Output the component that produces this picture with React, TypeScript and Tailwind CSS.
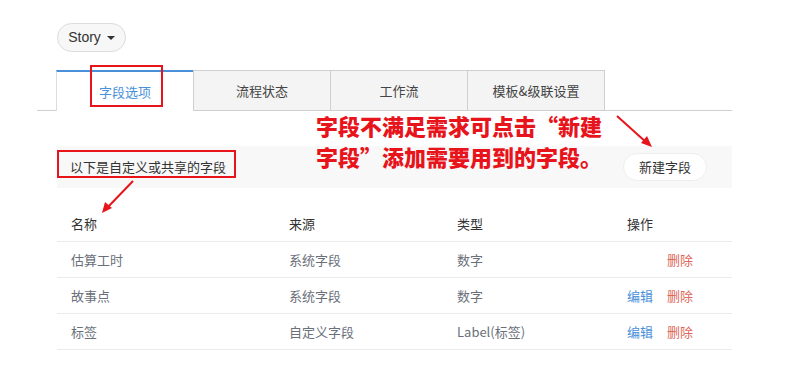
import React from "react";

const rows = [
  { name: "估算工时", src: "系统字段", type: "数字", edit: false },
  { name: "故事点", src: "系统字段", type: "数字", edit: true },
  { name: "标签", src: "自定义字段", type: "Label(标签)", edit: true },
];

export default function App() {
  return (
    <div
      className="relative w-[805px] h-[390px] bg-white overflow-hidden"
      style={{ fontFamily: '"Microsoft YaHei", "Noto Sans CJK SC", "Liberation Sans", sans-serif' }}
    >
      <div className="pt-[23px] pl-[57px]">
        <button className="h-[29px] w-[69px] rounded-full border border-[#dcdcdc] bg-[#f7f7f7] flex items-center justify-center gap-[6px] text-[14px] text-[#333]">
          <span style={{ fontFamily: '"Liberation Sans", Arial, sans-serif' }}>Story</span>
          <span className="w-0 h-0 border-l-[4px] border-r-[4px] border-t-[4px] border-l-transparent border-r-transparent border-t-[#333]" />
        </button>
      </div>

      <div className="mt-[18px] ml-[37px] w-[695px] border-b border-[#cfcfcf] pl-[19px] flex items-end h-[41px]">
        <div className="relative w-[137px] h-[41px] -mb-px bg-white border-t-2 border-t-[#4a90d9] border-l border-l-[#dcdcdc] flex items-center justify-center text-[13px] text-[#4a90d9]">
          字段选项
          <div className="absolute left-[33px] top-[-7px] w-[73px] h-[42px] border-2 border-[#e8141c]" />
        </div>
        <div className="w-[137px] h-[40px] bg-[#f4f4f4] border-t border-l border-[#cfcfcf] flex items-center justify-center text-[13px] text-[#444]">
          流程状态
        </div>
        <div className="w-[137px] h-[40px] bg-[#f4f4f4] border-t border-l border-[#cfcfcf] flex items-center justify-center text-[13px] text-[#444]">
          工作流
        </div>
        <div className="w-[138px] h-[40px] bg-[#f4f4f4] border-t border-l border-r border-[#cfcfcf] flex items-center justify-center text-[13px] text-[#444]">
          模板&amp;级联设置
        </div>
      </div>

      <div className="ml-[57px] w-[675px] mt-[35px] h-[42px] bg-[#f8f8f8] flex items-center justify-between pl-[13px] pr-[25px]">
        <div className="relative text-[13px] text-[#333]">
          以下是自定义或共享的字段
          <div className="absolute left-[-13px] top-[-7px] w-[179px] h-[28px] border-2 border-[#e8141c]" />
        </div>
        <button className="h-[28px] w-[84px] rounded-full bg-white border border-[#eeeeee] text-[13px] text-[#333] flex items-center justify-center">
          新建字段
        </button>
      </div>

      <div className="ml-[57px] w-[675px] mt-[18px] text-[13px]">
        <div className="grid grid-cols-[218px_168px_170px_119px] h-[36px] items-center border-b border-[#ebebeb] text-[#333]">
          <div className="pl-[14px]">名称</div>
          <div className="pl-[14px]">来源</div>
          <div className="pl-[14px]">类型</div>
          <div className="pl-[14px]">操作</div>
        </div>
        {rows.map((r) => (
          <div
            key={r.name}
            className="grid grid-cols-[218px_168px_170px_119px] h-[36px] items-center border-b border-[#ebebeb] text-[#6a707a]"
          >
            <div className="pl-[14px]">{r.name}</div>
            <div className="pl-[14px]">{r.src}</div>
            <div className="pl-[14px]">{r.type}</div>
            <div className="pl-[14px] flex gap-[14px]">
              <span className={r.edit ? "text-[#4a90d9]" : "invisible"}>编辑</span>
              <span className="text-[#e0685a]">删除</span>
            </div>
          </div>
        ))}
      </div>

      <div
        className="absolute left-[316px] top-[110px] text-[22px] leading-[31px] font-black text-[#e8141c]"
        style={{ fontFamily: '"Noto Sans CJK SC", sans-serif' }}
      >
        <div>字段不满足需求可点击“新建</div>
        <div>字段”添加需要用到的字段。</div>
      </div>

      <svg className="absolute left-0 top-0 pointer-events-none" width="805" height="390">
        <line x1="617" y1="116" x2="647" y2="143" stroke="#e8141c" strokeWidth="2" />
        <polygon points="652,147 641,143 647,136" fill="#e8141c" />
        <line x1="133" y1="181" x2="107" y2="208" stroke="#e8141c" strokeWidth="2" />
        <polygon points="102,213 105,202 112,208" fill="#e8141c" />
      </svg>
    </div>
  );
}
